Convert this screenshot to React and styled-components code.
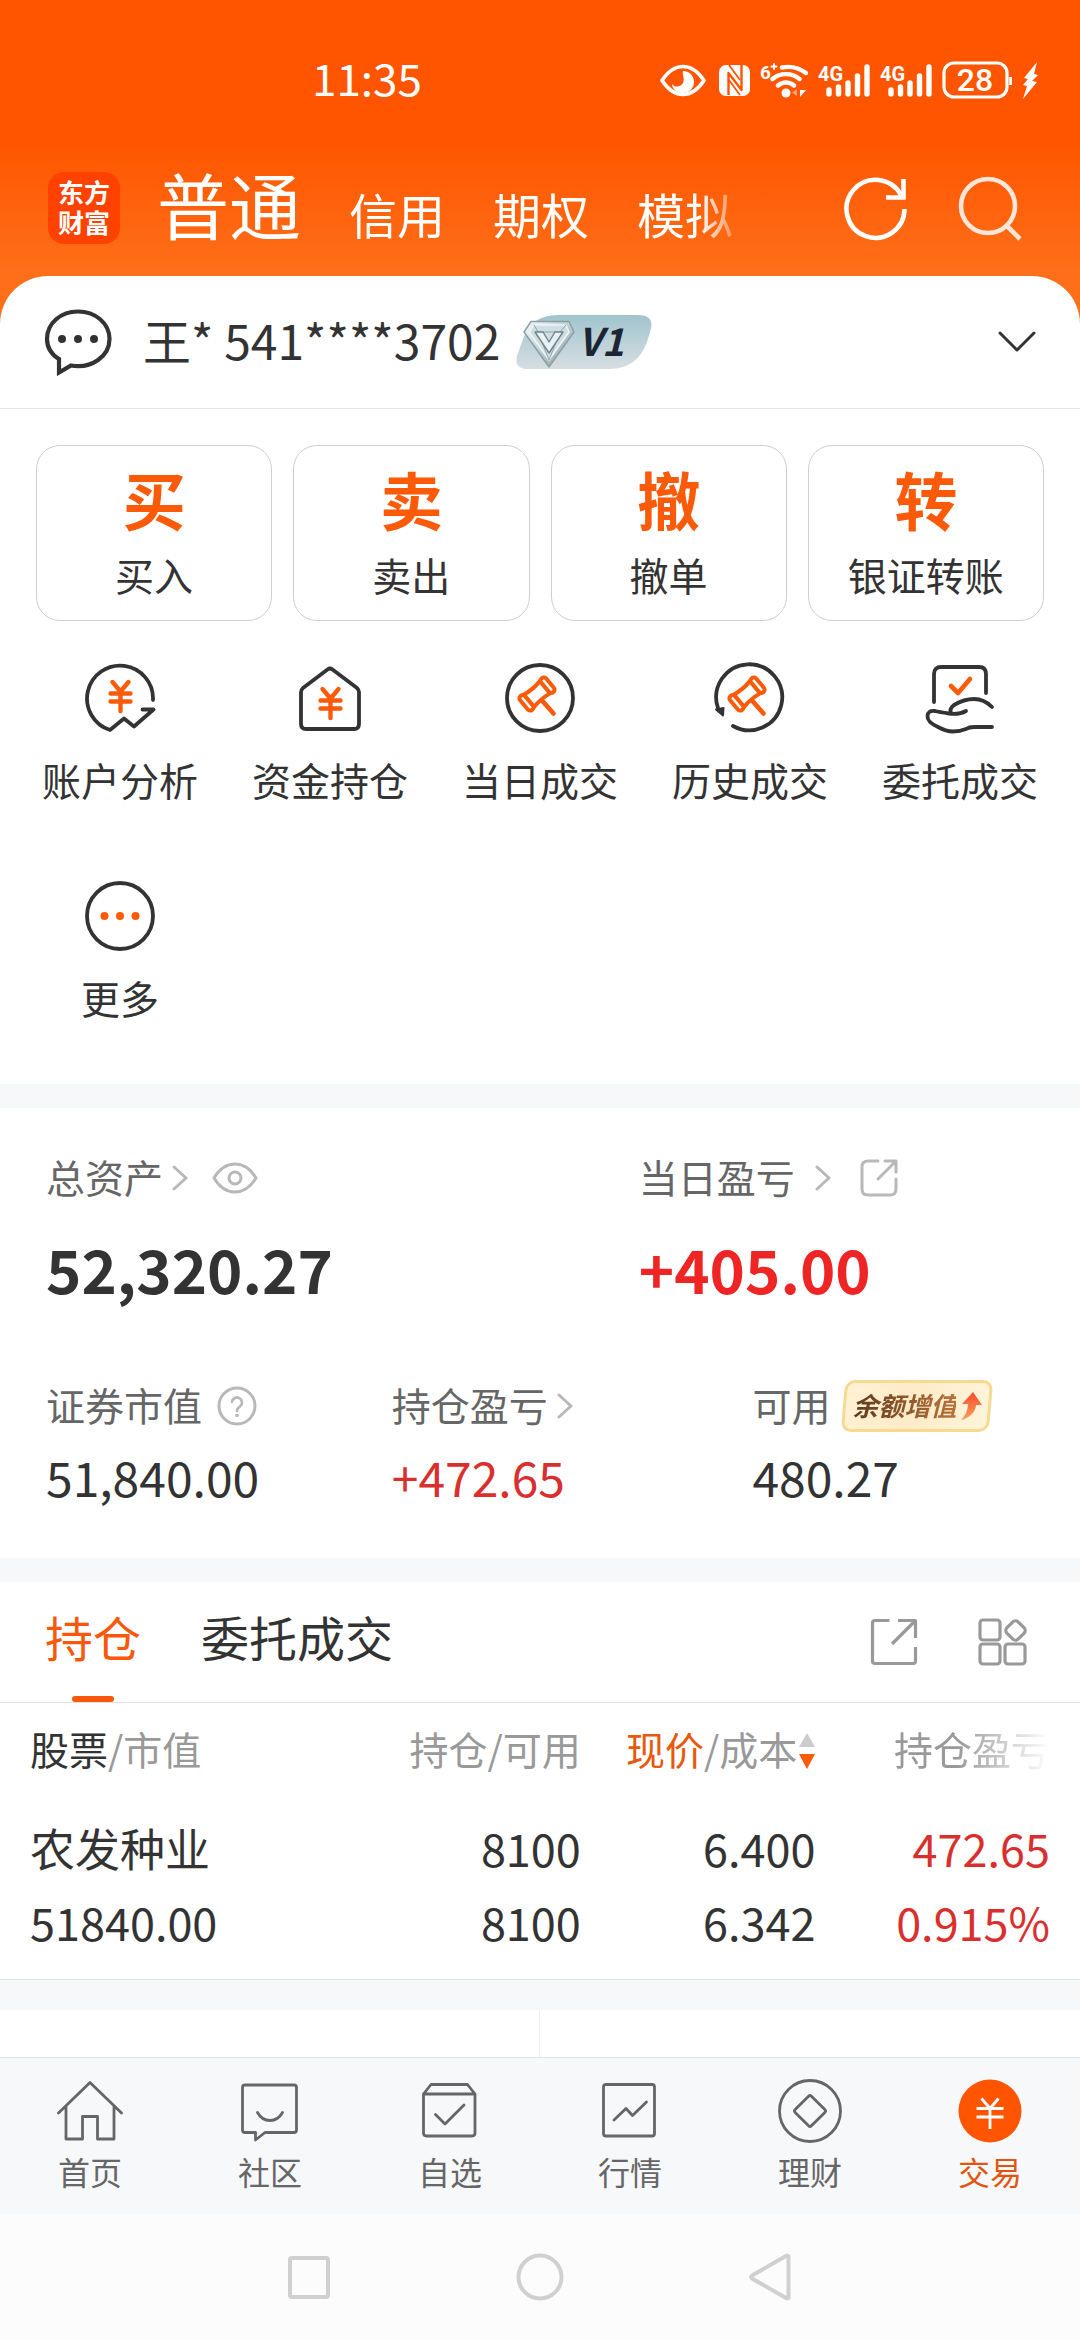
import React from "react";
import styled, { createGlobalStyle, css } from "styled-components";

const color = {
  brand: "#ff5500",
  ink: "#333333",
  sub: "#666666",
  mute: "#999999",
  faint: "#b8b8b8",
  rise: "#d9302f",
  riseStrong: "#ef2425",
  line: "#e2e3e5",
  band: "#f7f8fa",
};

const GlobalStyle = createGlobalStyle`
  * { box-sizing: border-box; }
  body {
    margin: 0;
    background: #fff;
    color: ${color.ink};
    font-family: "Noto Sans CJK SC", "Noto Sans", sans-serif;
  }
  button { border: 0; padding: 0; background: none; font: inherit; color: inherit; cursor: pointer; }
  a { color: inherit; text-decoration: none; }
  svg { display: block; flex: none; }
  svg text { font-family: Roboto, "Noto Sans", sans-serif; }
  h1, p, dl, dd, dt { margin: 0; font-weight: 400; }
`;

const Page = styled.div`
  display: flex;
  flex-direction: column;
  min-height: 100vh;
`;

const Hero = styled.header`
  padding-bottom: 48px;
  background: linear-gradient(to bottom, #ff5500 0, #ff5500 140px, #ff6e18 270px, #ff7019 100%);
  color: #fff;
`;

const StatusBar = styled.div`
  display: flex;
  align-items: center;
  justify-content: space-between;
  height: 144px;
  padding: 16px 42px 0 312px;
`;

const Clock = styled.time`
  padding-bottom: 6px;
  font-size: 44px;
  line-height: 64px;
`;

const StatusIcons = styled.div`
  display: flex;
  align-items: center;
  gap: 10px;
`;

const TopNav = styled.nav`
  display: flex;
  align-items: center;
  height: 132px;
  padding: 0 57px 4px 48px;
`;

const Brand = styled.a`
  flex: none;
  width: 72px;
  height: 72px;
  margin-right: 37px;
  padding: 5px 10px;
  border-radius: 16px;
  background: #ff4200;
  font-size: 26px;
  line-height: 30px;
  font-weight: 700;
`;

const Markets = styled.div`
  flex: 1;
  display: flex;
  align-items: baseline;
  gap: 48px;
  max-width: 590px;
  padding-bottom: 10px;
  white-space: nowrap;
  mask-image: linear-gradient(to right, #000 92%, transparent 100%);
`;

const Market = styled.button`
  font-size: ${(p) => (p.$active ? 72 : 48)}px;
  line-height: ${(p) => (p.$active ? 104 : 72)}px;
`;

const TopActions = styled.div`
  display: flex;
  gap: 48px;
  margin-left: auto;
`;

const Sheet = styled.main`
  flex: 1;
  display: flex;
  flex-direction: column;
  margin-top: -48px;
  border-radius: 48px 48px 0 0;
  background: #fff;
`;

const AccountRow = styled.section`
  display: flex;
  align-items: center;
  height: 133px;
  padding: 0 44px 0 42px;
  border-bottom: 1px solid ${color.line};
`;

const AccountName = styled.h1`
  margin: 0 16px 0 29px;
  padding-bottom: 6px;
  font-size: 48px;
  line-height: 64px;
`;

const VipBadge = styled.span`
  position: relative;
  display: block;
  width: 136px;
  height: 54px;
`;

const VipText = styled.span`
  position: absolute;
  left: 62px;
  top: -2px;
  font-size: 38px;
  line-height: 54px;
  font-weight: 700;
  font-style: italic;
  color: #1d2433;
`;

const Expand = styled.button`
  margin-left: auto;
`;

const TradeCards = styled.section`
  display: grid;
  grid-template-columns: repeat(4, 1fr);
  gap: 21px;
  padding: 36px 36px 0;
`;

const TradeCard = styled.button`
  display: flex;
  flex-direction: column;
  align-items: center;
  height: 176px;
  padding-top: 18px;
  border: 1px solid #cfcfcf;
  border-radius: 24px;
`;

const TradeGlyph = styled.span`
  font-size: 63px;
  line-height: 68px;
  font-weight: 700;
  color: #fb5a08;
`;

const Label = styled.span`
  padding-bottom: 4px;
  font-size: 39px;
  line-height: 52px;
  color: ${(p) => p.$tone || color.ink};
`;

const TradeLabel = styled(Label)`
  margin-top: 16px;
`;

const Shortcuts = styled.section`
  display: grid;
  grid-template-columns: repeat(5, 1fr);
  row-gap: 71px;
  padding: 41px 15px 57px;
`;

const Shortcut = styled.button`
  display: flex;
  flex-direction: column;
  align-items: center;
  gap: 19px;
`;

const Band = styled.div`
  height: ${(p) => p.$height || 24}px;
  background: ${color.band};
  border-top: ${(p) => (p.$ruled ? `1px solid ${color.line}` : "0")};
`;

const Assets = styled.section`
  padding: 42px 46px 50px;
`;

const Totals = styled.dl`
  display: grid;
  grid-template-columns: 60% 40%;
`;

const Details = styled.dl`
  display: grid;
  grid-template-columns: 35% 36.5% 28.5%;
  margin-top: 68px;
`;

const Term = styled.dt`
  display: flex;
  align-items: center;
  height: 56px;
  white-space: nowrap;
`;

const Gap = styled.span`
  display: flex;
  margin-left: ${(p) => p.$size}px;
`;

const Total = styled.dd`
  margin-top: 20px;
  font-size: 60px;
  line-height: 84px;
  font-weight: 700;
  color: ${(p) => (p.$rise ? color.riseStrong : color.ink)};
`;

const Amount = styled.dd`
  margin-top: 10px;
  font-size: 48px;
  line-height: 64px;
  color: ${(p) => (p.$rise ? color.rise : color.ink)};
`;

const PromoButton = styled.button`
  position: relative;
  display: flex;
  align-items: center;
  gap: 4px;
  height: 52px;
  margin-left: 10px;
  padding: 0 12px;
  &::before {
    content: "";
    position: absolute;
    inset: 0 3px;
    border: 3px solid #f7d98f;
    border-radius: 10px;
    background: linear-gradient(100deg, #fff2d3, #fdebc8 45%, #fff4da);
    transform: skewX(-5deg);
  }
`;

const PromoText = styled.span`
  position: relative;
  padding-bottom: 2px;
  font-size: 26px;
  line-height: 40px;
  font-weight: 700;
  font-style: italic;
  color: transparent;
  background: linear-gradient(to right, #5f3a1e, #b87339);
  background-clip: text;
`;

const PromoArrow = styled.svg`
  position: relative;
`;

const TabRow = styled.div`
  display: flex;
  align-items: stretch;
  height: 121px;
  padding: 0 52px 0 45px;
  border-bottom: 1px solid ${color.line};
`;

const Tab = styled.button`
  display: flex;
  flex-direction: column;
  align-items: center;
  justify-content: space-between;
  margin-right: 60px;
  padding-top: 22px;
  font-size: 48px;
  line-height: 64px;
  color: ${(p) => (p.$active ? "#f8580a" : color.ink)};
  ${(p) =>
    p.$active &&
    css`
      &::after {
        content: "";
        width: 42px;
        height: 6px;
        border-radius: 3px;
        background: #f8580a;
      }
    `}
`;

const TabTools = styled.div`
  display: flex;
  align-items: center;
  gap: 60px;
  margin-left: auto;
`;

const TableWrap = styled.div`
  padding: 0 30px 20px;
`;

const Holdings = styled.table`
  width: 100%;
  table-layout: fixed;
  border-collapse: collapse;
  text-align: right;
  th, td { padding: 0; font-weight: 400; white-space: nowrap; }
  th:first-child, td:first-child { text-align: left; }
  thead th { height: 108px; padding-bottom: 18px; }
`;

const Head = styled.th`
  font-size: 39px;
  line-height: 56px;
  color: ${color.mute};
  ${(p) => p.$fade && css`mask-image: linear-gradient(to right, #000 60%, transparent 100%);`}
`;

const Mark = styled.span`
  color: ${(p) => (p.$active ? "#e8590c" : color.ink)};
`;

const SortButton = styled.button`
  display: inline-flex;
  align-items: center;
  gap: 2px;
  vertical-align: top;
`;

const SortIcon = styled.span`
  padding-top: 6px;
`;

const Cell = styled.td`
  font-size: 45px;
  line-height: 74px;
  color: ${(p) => (p.$rise ? color.rise : color.ink)};
`;

const RowLine = styled.span`
  display: block;
`;

const Panels = styled.div`
  flex: 1;
  display: grid;
  grid-template-columns: 1fr 1fr;
  min-height: 46px;
`;

const Panel = styled.div`
  border-right: ${(p) => (p.$ruled ? "1px solid #eeeeee" : "0")};
`;

const TabBar = styled.nav`
  display: grid;
  grid-template-columns: repeat(6, 1fr);
  height: 157px;
  padding-top: 20px;
  border-top: 1px solid ${color.line};
  background: ${color.band};
`;

const TabItem = styled.a`
  display: flex;
  flex-direction: column;
  align-items: center;
  gap: 5px;
  font-size: 32px;
  line-height: 44px;
  color: ${(p) => (p.$active ? "#e0560f" : color.sub)};
`;

const SystemNav = styled.nav`
  display: flex;
  align-items: center;
  justify-content: center;
  gap: 183px;
  height: 126px;
  background: #fcfcfc;
`;

/* ---------- drawings ---------- */

function Svg({ w, h, children, stroke = "none", sw = 3, label, ...rest }) {
  return (
    <svg width={w} height={h} viewBox={`0 0 ${w} ${h}`} fill="none" stroke={stroke} strokeWidth={sw}
      strokeLinecap="round" strokeLinejoin="round" aria-hidden={label ? undefined : true} aria-label={label} {...rest}>
      {children}
    </svg>
  );
}

const EyeStatus = () => (
  <Svg w={49} h={40} stroke="#fff" sw={3.6}>
    <path d="M2 20.500C9 10 16 6.500 23 6.500S37 10 44 20.500C37 31 30 34.500 23 34.500S9 31 2 20.500Z" />
    <path d="M23 11c6 0 11 4.500 11 11s-5 11-11 11-11-4-11-9c3 4 9 3 11-1 2-5-1-8 0-12Z" fill="#fff" stroke="none" />
  </Svg>
);

const Nfc = () => (
  <Svg w={31} h={40}>
    <rect x="0" y="5" width="31" height="31" rx="7" fill="#fff" />
    <path d="M9.500 35V13L22.500 30V5" stroke={color.brand} strokeWidth="2.400" strokeLinecap="butt" />
    <path d="M10 5 21 20M10 20 21 35" stroke={color.brand} strokeWidth="1.800" strokeLinecap="butt" />
  </Svg>
);

const Wifi = () => (
  <Svg w={48} h={40} stroke="#fff" sw={4.4}>
    <text x="0" y="19" fontSize="19" fontWeight="700" fill="#fff" stroke="none">6</text>
    <path d="M11.500 6.500h5M14 4v5" strokeWidth="2" />
    <circle cx="26" cy="33" r="4.500" fill="#fff" stroke="none" />
    <path d="M18 25.500a12 12 0 0 1 16 0M12.500 19a21 21 0 0 1 27 0M22 7.500A30 30 0 0 1 46 13" />
    <path d="M37 29v7l-5-3.500Z" fill="#ffa273" stroke="none" />
    <path d="M40 30v7l6-7Z" fill="#fff" stroke="none" />
  </Svg>
);

const Signal = () => (
  <Svg w={52} h={40} stroke="#fff" sw={5.4}>
    <text x="0" y="21" fontSize="20" fontWeight="700" fill="#fff" stroke="none">4G</text>
    <path d="M11 30v4M20.500 27v7M30 23v11M39.500 16v18M49 7v27" />
  </Svg>
);

const Battery = () => (
  <Svg w={70} h={40} stroke="#fff" sw={3.2}>
    <rect x="2" y="3" width="63" height="34" rx="10" />
    <path d="M69 17v8" strokeWidth="3.600" strokeLinecap="butt" />
    <text x="33" y="31" fontSize="32" fontWeight="500" textAnchor="middle" fill="#fff" stroke="none">28</text>
  </Svg>
);

const Bolt = () => (
  <Svg w={16} h={40}>
    <path d="M15 2 2 18l4 1-5 6 4 1-4 13L15 22l-5-1 6-6-4-1Z" fill="#fff" />
  </Svg>
);

const Refresh = () => (
  <Svg w={66} h={66} stroke="#fff" sw={4.6} strokeLinecap="butt" strokeLinejoin="miter">
    <path d="M61.500 34A29 29 0 1 1 58 20" />
    <path d="M60.500 4V22.500H43" />
  </Svg>
);

const Search = () => (
  <Svg w={66} h={66} stroke="#ffe6d8" sw={4.6} strokeLinecap="butt">
    <circle cx="31" cy="31" r="27" />
    <path d="M49 50 63 64" />
  </Svg>
);

const Bubble = () => (
  <Svg w={72} h={68} stroke={color.ink} sw={4.200}>
    <path d="M17 51V64.500L29 57.500C50 61 67.500 48 67.500 31C67.500 15 53 3.500 36 3.500S5 15 5 31C5 39 9.500 46.500 17 51Z" strokeLinejoin="miter" />
    <g fill={color.ink} stroke="none">
      <circle cx="20" cy="31" r="4" /><circle cx="36" cy="31" r="4" /><circle cx="52" cy="31" r="4" />
    </g>
  </Svg>
);

const VipShape = () => (
  <Svg w={136} h={54}>
    <defs>
      <linearGradient id="vipBg" x1="0" y1="0" x2="0" y2="1">
        <stop offset="0" stopColor="#a1c4cd" /><stop offset="1" stopColor="#d6dee3" />
      </linearGradient>
      <linearGradient id="gem" x1="0" y1="0" x2="1" y2="1">
        <stop offset="0" stopColor="#f5fafb" /><stop offset="0.500" stopColor="#b9cdd3" /><stop offset="1" stopColor="#87999f" />
      </linearGradient>
    </defs>
    <path d="M42 0H122Q138 0 135 14L131 27Q121 54 94 54H12Q-2 54 1 41L7 24Q15 0 42 0Z" fill="url(#vipBg)" />
    <path d="M15 6.500H53L58 17 33 52 8 17Z" fill="url(#gem)" stroke="#8d9da3" strokeWidth="1.400" />
    <path d="M18 10H50L53 17 33 45 13 17Z" fill="#cfdee2" stroke="#eef5f6" strokeWidth="1.600" />
    <path d="M18 10 22 17H44L50 10M22 17 33 45 44 17" stroke="#91a6ad" strokeWidth="1" />
    <path d="M19 17h8l6 10 6-10h8L33 38Z" fill="#e8f1f3" stroke="#6f848b" strokeWidth="1.400" />
  </Svg>
);

const ChevronDown = () => (
  <Svg w={38} h={22} stroke={color.ink} sw={3}><path d="M2 2 19 19 36 2" /></Svg>
);

const ChevronRight = () => (
  <Svg w={16} h={26} stroke={color.faint} sw={3}><path d="M2 2 14 13 2 24" /></Svg>
);

const Eye = () => (
  <Svg w={46} h={34} stroke={color.faint} sw={3}>
    <path d="M2 17C8 7 15 3 23 3s15 4 21 14C38 27 31 31 23 31S8 27 2 17Z" /><circle cx="23" cy="17" r="6" />
  </Svg>
);

const Question = () => (
  <Svg w={40} h={40} stroke={color.faint} sw={3}>
    <circle cx="20" cy="20" r="18" />
    <path d="M15 16a5 5 0 1 1 8 4.400c-2 1.400-3 2.400-3 4.600" strokeWidth="2.600" />
    <circle cx="20" cy="29.500" r="1.800" fill={color.faint} stroke="none" />
  </Svg>
);

const ShareSmall = () => (
  <Svg w={38} h={38} stroke={color.faint} sw={3}>
    <path d="M18 2H8Q2 2 2 8V30Q2 36 8 36H30Q36 36 36 30V20M18 20 35 3M25 2H36V13" />
  </Svg>
);

const Share = () => (
  <Svg w={48} h={48} stroke={color.mute} sw={3.200} strokeLinecap="butt">
    <path d="M19.500 2.500H5Q2.500 2.500 2.500 5V43Q2.500 45.500 5 45.500H43Q45.500 45.500 45.500 43V29" />
    <path d="M28 2.500H45.500V20M22 26 45 3" />
  </Svg>
);

const Apps = () => (
  <Svg w={50} h={48} stroke={color.mute} sw={3.200}>
    <rect x="2" y="2" width="20" height="20" rx="3" />
    <rect x="2" y="26" width="20" height="20" rx="3" />
    <rect x="27" y="26" width="20" height="20" rx="3" />
    <rect x="29.500" y="4.500" width="16" height="16" rx="4" transform="rotate(45 37.500 12.500)" />
  </Svg>
);

const SortArrows = () => (
  <Svg w={16} h={36}>
    <path d="M8 0 16 14H0Z" fill="#cccccc" /><path d="M8 36 0 21H16Z" fill="#ff5a0a" />
  </Svg>
);

const Yen = ({ y = 0 }) => (
  <path transform={`translate(0 ${y})`} d="M28.500 20 36.500 29.500 44.500 20M26.500 31.500H46.500M26.500 39.500H46.500M36.500 30V49" stroke="#fb5a08" strokeWidth="4.400" />
);

const Gavel = () => (
  <g stroke="#fb5a08" strokeWidth="4">
    <g transform="translate(33 32) rotate(-40)">
      <rect x="-17" y="-9" width="6.500" height="18" rx="3" />
      <rect x="10.500" y="-9" width="6.500" height="18" rx="3" />
      <path d="M-10.500 -8Q0 -6 10.500 -8M-10.500 8Q0 6 10.500 8" />
    </g>
    <path d="M38.500 39 49.500 51.500" strokeWidth="4.600" />
  </g>
);

const shortcutIcons = {
  analysis: <><path d="M69 38A33 33 0 1 0 26 68L40 56.500 50 64.500 69.500 47.500H58.500" /><Yen /></>,
  funds: <><path d="M33.500 7.500Q36 5.500 38.500 7.500L63 26Q65 28 65 30V62Q65 67 60 67H12Q7 67 7 62V30Q7 28 9 26Z" /><Yen y={7} /></>,
  today: <><circle cx="36" cy="36" r="33" /><Gavel /></>,
  history: (
    <>
      <path d="M19 64A33 33 0 1 0 4 46" />
      <path d="M2 47.500 9.500 46 9 53.500Z" fill={color.ink} strokeWidth="2" /><Gavel />
    </>
  ),
  entrust: (
    <>
      <path d="M10 40V12Q10 5 17 5H55Q62 5 62 12V31" />
      <path d="M68 45Q60 37 50 37T30 43Q25 47 27 51" />
      <path d="M42 49Q35 53 25 51.500T11 49Q4 48 3.500 54T14 65Q22 69.500 29 69.500T42 67Q45 65 50 65H68" />
      <path d="M27 24 34 31 46 17" stroke="#fb5a08" strokeWidth="4.600" />
    </>
  ),
  more: (
    <>
      <circle cx="36" cy="36" r="33" />
      <g fill="#fb5a08" stroke="none"><circle cx="20.500" cy="36" r="4" /><circle cx="36" cy="36" r="4" /><circle cx="51.500" cy="36" r="4" /></g>
    </>
  ),
};

const tabIcons = {
  home: <path d="M1.500 35 33 4.500 64.500 35M9 28V61H25.500V38.500H40.500V61H57V28" />,
  community: <><path d="M8 7H57Q59.500 7 59.500 9.500V52Q59.500 54.500 57 54.500H28L18.500 62V54.500H8Q5.500 54.500 5.500 52V9.500Q5.500 7 8 7Z" /><path d="M20.500 34.500Q25 42.500 33 42.500T45.500 34.500" /></>,
  picks: <><path d="M6.500 16 14 6.500H50.500L58 16V55Q58 58 55 58H9.500Q6.500 58 6.500 55ZM6.500 16H58" /><path d="M18.500 36.500 28 46 47 27" /></>,
  quotes: <><rect x="6.500" y="6.500" width="51" height="51.500" rx="2.500" /><path d="M17 42 29 30.500 35.500 37.500 49.500 24" /></>,
  wealth: <><circle cx="33" cy="33" r="30.500" /><rect x="21.500" y="21.500" width="23" height="23" rx="2" transform="rotate(45 33 33)" /></>,
  trade: <><circle cx="33" cy="33" r="31.500" fill={color.brand} stroke="none" /><path d="M24.500 20.500 33 30.500 41.500 20.500M19.500 30.500H46.500M19.500 39H46.500M33 30.500V51" stroke="#fff" strokeLinecap="butt" /></>,
};

/* ---------- content ---------- */

const markets = ["普通", "信用", "期权", "模拟"];
const trades = [["买", "买入"], ["卖", "卖出"], ["撤", "撤单"], ["转", "银证转账"]];
const shortcuts = [
  ["analysis", "账户分析"], ["funds", "资金持仓"], ["today", "当日成交"],
  ["history", "历史成交"], ["entrust", "委托成交"], ["more", "更多"],
];
const tabs = [
  ["home", "首页"], ["community", "社区"], ["picks", "自选"],
  ["quotes", "行情"], ["wealth", "理财"], ["trade", "交易"],
];
const holdings = [
  { name: "农发种业", value: "51840.00", held: "8100", free: "8100", price: "6.400", cost: "6.342", gain: "472.65", rate: "0.915%" },
];

export default function App() {
  return (
    <Page>
      <GlobalStyle />
      <Hero>
        <StatusBar>
          <Clock>11:35</Clock>
          <StatusIcons><EyeStatus /><Nfc /><Wifi /><Signal /><Signal /><Battery /><Bolt /></StatusIcons>
        </StatusBar>
        <TopNav>
          <Brand href="#">东方财富</Brand>
          <Markets>
            {markets.map((m, i) => <Market key={m} $active={i === 0}>{m}</Market>)}
          </Markets>
          <TopActions>
            <button aria-label="刷新"><Refresh /></button>
            <button aria-label="搜索"><Search /></button>
          </TopActions>
        </TopNav>
      </Hero>

      <Sheet>
        <AccountRow>
          <button aria-label="消息"><Bubble /></button>
          <AccountName>王* 541****3702</AccountName>
          <VipBadge><VipShape /><VipText>V1</VipText></VipBadge>
          <Expand aria-label="展开"><ChevronDown /></Expand>
        </AccountRow>

        <TradeCards>
          {trades.map(([glyph, label]) => (
            <TradeCard key={label}><TradeGlyph>{glyph}</TradeGlyph><TradeLabel>{label}</TradeLabel></TradeCard>
          ))}
        </TradeCards>

        <Shortcuts>
          {shortcuts.map(([icon, label]) => (
            <Shortcut key={icon}>
              <Svg w={72} h={72} stroke={color.ink} sw={3.800}>{shortcutIcons[icon]}</Svg>
              <Label>{label}</Label>
            </Shortcut>
          ))}
        </Shortcuts>

        <Band />

        <Assets>
          <Totals>
            <div>
              <Term><Label $tone={color.sub}>总资产</Label><Gap $size={9}><ChevronRight /></Gap><Gap $size={24}><Eye /></Gap></Term>
              <Total>52,320.27</Total>
            </div>
            <div>
              <Term><Label $tone={color.sub}>当日盈亏</Label><Gap $size={20}><ChevronRight /></Gap><Gap $size={29}><ShareSmall /></Gap></Term>
              <Total $rise>+405.00</Total>
            </div>
          </Totals>
          <Details>
            <div>
              <Term><Label $tone={color.sub}>证券市值</Label><Gap $size={15}><Question /></Gap></Term>
              <Amount>51,840.00</Amount>
            </div>
            <div>
              <Term><Label $tone={color.sub}>持仓盈亏</Label><Gap $size={9}><ChevronRight /></Gap></Term>
              <Amount $rise>+472.65</Amount>
            </div>
            <div>
              <Term>
                <Label $tone={color.sub}>可用</Label>
                <PromoButton>
                  <PromoText>余额增值</PromoText>
                  <PromoArrow width="22" height="28" viewBox="0 0 22 28" aria-hidden="true">
                    <defs><linearGradient id="up" x1="0" y1="0" x2="0" y2="1"><stop offset="0" stopColor="#fb4a2c" /><stop offset="1" stopColor="#f7a25e" /></linearGradient></defs>
                    <path d="M13 0 22 13H16Q15 24 1 28 8 21 8 12H2Z" fill="url(#up)" />
                  </PromoArrow>
                </PromoButton>
              </Term>
              <Amount>480.27</Amount>
            </div>
          </Details>
        </Assets>

        <Band />

        <TabRow>
          <Tab $active>持仓</Tab>
          <Tab>委托成交</Tab>
          <TabTools>
            <button aria-label="分享"><Share /></button>
            <button aria-label="更多功能"><Apps /></button>
          </TabTools>
        </TabRow>

        <TableWrap>
          <Holdings>
            <colgroup><col style={{ width: "31%" }} /><col style={{ width: "23%" }} /><col style={{ width: "23%" }} /><col style={{ width: "23%" }} /></colgroup>
            <thead>
              <tr>
                <Head><Mark>股票</Mark>/市值</Head>
                <Head>持仓/可用</Head>
                <Head><SortButton><span><Mark $active>现价</Mark>/成本</span><SortIcon><SortArrows /></SortIcon></SortButton></Head>
                <Head $fade>持仓盈亏</Head>
              </tr>
            </thead>
            <tbody>
              {holdings.map((h) => (
                <tr key={h.name}>
                  <Cell><RowLine>{h.name}</RowLine><RowLine>{h.value}</RowLine></Cell>
                  <Cell><RowLine>{h.held}</RowLine><RowLine>{h.free}</RowLine></Cell>
                  <Cell><RowLine>{h.price}</RowLine><RowLine>{h.cost}</RowLine></Cell>
                  <Cell $rise><RowLine>{h.gain}</RowLine><RowLine>{h.rate}</RowLine></Cell>
                </tr>
              ))}
            </tbody>
          </Holdings>
        </TableWrap>

        <Band $height={31} $ruled />
        <Panels><Panel $ruled /><Panel /></Panels>
      </Sheet>

      <TabBar>
        {tabs.map(([icon, label]) => (
          <TabItem key={icon} href="#" $active={icon === "trade"}>
            <Svg w={66} h={66} stroke={color.sub} sw={2.800}>{tabIcons[icon]}</Svg>
            {label}
          </TabItem>
        ))}
      </TabBar>

      <SystemNav>
        <button aria-label="最近任务"><Svg w={48} h={48} stroke="#d0d0d0" sw={4}><rect x="5" y="5" width="38" height="39" rx="2" /></Svg></button>
        <button aria-label="主屏幕"><Svg w={48} h={48} stroke="#d0d0d0" sw={4}><circle cx="24" cy="24" r="21.500" /></Svg></button>
        <button aria-label="返回"><Svg w={48} h={48} stroke="#d0d0d0" sw={4}><path d="M41.500 3.500V44.500Q41 46 39 45L5 25.500Q3 24 5 22.500L39 3Q41 2 41.500 3.500Z" /></Svg></button>
      </SystemNav>
    </Page>
  );
}
